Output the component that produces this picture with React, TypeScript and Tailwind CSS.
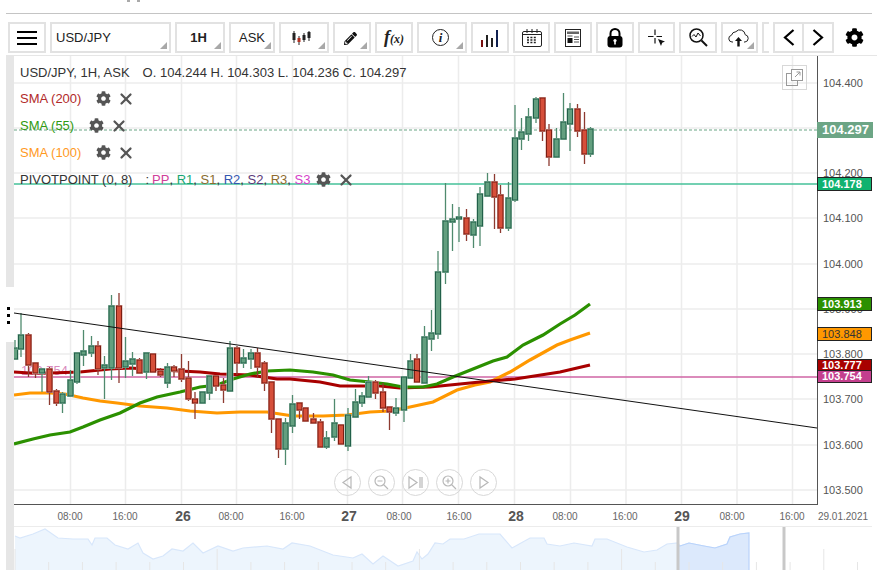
import type { ReactNode } from "react"
import { FaCog, FaPencilAlt } from "react-icons/fa"
import { X } from "lucide-react"

// [x, wickTop, wickBottom, bodyTop, bodyBottom, up]
const candles: [number, number, number, number, number, number][] = [
  [15, 340, 359, 348, 359, 1], [21, 313, 357, 335, 349, 1], [28.5, 333, 377, 335, 365, 0], [35.5, 363, 378, 363, 373, 0],
  [42, 368, 392, 369, 373, 1], [49.5, 367, 405, 369, 392, 0], [56.5, 389, 406, 391, 403, 0], [62.5, 392, 413, 394, 403, 1],
  [70.5, 370, 397, 380, 396, 1], [77, 353, 384, 353, 382, 1], [83.5, 330, 366, 351, 355, 1], [91.5, 336, 357, 346, 353, 1],
  [98, 341, 375, 346, 369, 0], [104.5, 356, 399, 365, 368, 1], [111.5, 295, 380, 306, 368, 1], [119, 293, 383, 306, 368, 0],
  [125.5, 337, 378, 361, 367, 1], [132.5, 352, 376, 359, 364, 1], [139.5, 358, 374, 360, 373, 0], [146.5, 353, 379, 353, 372, 1],
  [153, 353, 373, 354, 372, 0], [160.5, 368, 377, 371, 375, 0], [167.5, 363, 388, 367, 383, 1], [174, 365, 377, 367, 371, 0],
  [181.5, 354, 382, 369, 379, 0], [188.5, 361, 401, 378, 399, 0], [195, 392, 419, 399, 403, 0], [202.5, 392, 404, 392, 403, 1],
  [209.5, 375, 400, 376, 393, 1], [216, 375, 391, 376, 386, 0], [223.5, 378, 403, 385, 390, 0], [230, 341, 392, 348, 391, 1],
  [237, 346, 375, 348, 363, 0], [243.5, 349, 368, 358, 363, 1], [251, 349, 369, 353, 359, 1], [257.5, 348, 378, 353, 367, 0],
  [264.5, 361, 391, 363, 383, 0], [271.5, 382, 433, 382, 419, 0], [278.5, 419, 458, 419, 449, 0], [285.5, 418, 465, 423, 449, 1],
  [292.5, 395, 433, 404, 426, 1], [299.5, 403, 419, 403, 410, 0], [305.5, 408, 422, 408, 421, 0], [313.5, 413, 424, 419, 423, 0],
  [320.5, 419, 447, 422, 447, 0], [326.5, 431, 449, 438, 447, 1], [334.5, 399, 441, 423, 437, 1], [341, 424, 445, 425, 444, 0],
  [348, 408, 451, 415, 446, 1], [355.5, 389, 418, 402, 417, 1], [362, 392, 407, 396, 403, 1], [368.5, 376, 397, 382, 397, 1],
  [375.5, 380, 399, 382, 393, 0], [383, 383, 412, 392, 408, 0], [389.5, 407, 430, 407, 412, 0], [396, 398, 416, 408, 413, 1],
  [404, 376, 422, 377, 410, 1], [410.5, 354, 378, 361, 378, 1], [417, 354, 382, 359, 382, 0], [424.5, 326, 383, 337, 383, 1],
  [431.5, 310, 351, 333, 339, 1], [438, 251, 339, 272, 334, 1], [445.5, 183, 284, 221, 272, 1], [452.5, 204, 251, 219, 222, 1],
  [459, 207, 242, 217, 219, 1], [466.5, 209, 241, 218, 234, 0], [473.5, 219, 248, 222, 235, 1], [480, 187, 246, 194, 226, 1],
  [487.5, 173, 196, 182, 196, 1], [494.5, 174, 229, 182, 197, 0], [500.5, 185, 233, 195, 228, 0], [508.5, 182, 231, 198, 228, 1],
  [515, 105, 202, 138, 200, 1], [521.5, 118, 150, 132, 139, 1], [528.5, 108, 141, 117, 134, 1], [536, 97, 123, 99, 118, 1],
  [542.5, 98, 141, 98, 131, 0], [549, 124, 166, 130, 157, 0], [556.5, 128, 157, 139, 157, 1], [563.5, 93, 139, 122, 139, 1],
  [570, 103, 151, 109, 124, 1], [577.5, 104, 137, 109, 131, 0], [584.5, 112, 164, 130, 154, 0], [590.5, 127, 157, 129, 154, 1],
]

const sma55 = "14,444 33,439 50,435 70,432 83,427 100,420 120,413 140,403 157,397 180,392 200,387 217,385 233,379 250,374 267,371 290,370 313,372 333,375 350,380 370,382 387,384 403,387 423,387 437,384 453,377 473,369 493,361 507,357 523,345 543,335 560,324 575,315 590,304"
const sma200 = "14,372 30,373 50,373 80,372 110,369 130,368 160,370 200,372 220,374 250,375 277,379 290,379 320,382 340,386 380,386 400,388 430,387 460,384 490,381 515,379 560,372 590,365"
const sma100 = "14,395 30,393 50,393 65,394 83,398 100,401 117,403 140,406 167,408 190,411 217,413 240,412 267,412 280,414 293,416 323,416 347,415 370,412 390,411 410,407 433,402 457,390 475,385 490,382 510,372 530,360 557,345 570,340 590,333"

const navLine = "15,535 20,537 33,533 45,528 58,537 73,538 88,538 92,544 95,537 107,537 115,544 128,548 138,542 143,552 153,558 163,555 172,548 183,550 193,542 203,552 218,545 233,550 243,547 267,545 283,548 292,542 310,545 333,554 353,557 362,553 373,563 383,555 398,565 413,560 417,551 422,558 428,553 435,542 443,543 450,538 464,538 479,533 500,533 512,547 530,537 544,537 547,543 560,545 574,542 592,545 595,538 607,538 627,546 644,551 657,549 667,543 678,542 680,545 689,542 704,545 715,547 727,543 730,536 740,533 749,532"

const xTicks: { x: number; t: string; big?: boolean }[] = [
  { x: 70, t: "08:00" }, { x: 125, t: "16:00" }, { x: 183, t: "26", big: true }, { x: 231, t: "08:00" },
  { x: 292, t: "16:00" }, { x: 349, t: "27", big: true }, { x: 399, t: "08:00" }, { x: 459, t: "16:00" },
  { x: 516, t: "28", big: true }, { x: 565, t: "08:00" }, { x: 625, t: "16:00" }, { x: 682, t: "29", big: true },
  { x: 732, t: "08:00" }, { x: 792, t: "16:00" }, { x: 843, t: "29.01.2021" },
]

const gridY = [83, 128, 173, 218, 264, 309, 354, 399, 445, 490]

// 104.300 sits fully under the 104.297 marker, so it isn't listed
const priceTicks: [string, number][] = [
  ["104.400", 83], ["104.200", 173], ["104.100", 218], ["104.000", 264],
  ["103.900", 309], ["103.800", 354], ["103.700", 399], ["103.600", 445], ["103.500", 490],
]

const gridX = [70.5, 125.5, 181.5, 236.5, 292.5, 347.5, 402.5, 458.5, 514.5, 570.5, 626, 681.5, 737, 792.5]

function Btn({ w, arrow, children }: { w: string; arrow?: boolean; children?: ReactNode }) {
  return (
    <div className={`relative h-[31px] flex items-center justify-center border-2 border-[#e2e2e2] ${w}`}>
      {children}
      {arrow && <span className="absolute right-[2px] bottom-[2px] w-0 h-0 border-l-[7px] border-l-transparent border-b-[7px] border-b-[#a8a8a8]" />}
    </div>
  )
}

function LegendActions() {
  return (
    <span className="flex items-center gap-[6px] text-[#555]">
      <FaCog size={15} />
      <X size={18} strokeWidth={3} />
    </span>
  )
}

function Sma({ label, color }: { label: string; color: string }) {
  return (
    <div className="h-[27px] flex items-center gap-[15px]">
      <span className={color}>{label}</span>
      <LegendActions />
    </div>
  )
}

function ChartDrawing() {
  return (
    <svg className="absolute inset-0" width="803" height="448" viewBox="14 56 803 448">
      {gridX.map((x) => (
        <line key={x} x1={x} x2={x} y1="56" y2="504" stroke="#ececec" strokeWidth="1.5" />
      ))}
      {gridY.map((y) => (
        <line key={y} x1="14" x2="817" y1={y} y2={y} stroke="#ececec" strokeWidth="1.5" />
      ))}
      <line x1="14" x2="817" y1="130" y2="130" stroke="#6aa585" strokeDasharray="3 2" />
      <line x1="14" x2="817" y1="184" y2="184" stroke="#45c198" strokeWidth="1.6" />
      <line x1="14" x2="817" y1="377" y2="377" stroke="#cf64a4" strokeWidth="1.6" />
      <text x="21" y="375" fontSize="13" fill="#d98bbd">103.754</text>
      <polyline points={sma100} fill="none" stroke="#ff9800" strokeWidth="3.2" />
      <polyline points={sma200} fill="none" stroke="#a80000" strokeWidth="3.2" />
      <polyline points={sma55} fill="none" stroke="#2b9000" strokeWidth="3.2" />
      {candles.map(([x, wt, wb, bt, bb, up]) => (
        <g key={x}>
          <line x1={x} x2={x} y1={wt} y2={wb} stroke={up ? "#4f8a6e" : "#8d3a30"} strokeWidth="1.3" />
          <rect x={x - 3.5} y={bt - 1} width="7" height={bb - bt + 2} fill={up ? "#9fc4b0" : "#d8a49c"} />
          <rect
            x={x - 2.5}
            y={bt}
            width="5"
            height={bb - bt}
            fill={up ? "#639f7f" : "#d64f3a"}
            stroke={up ? "#22604a" : "#7c1d12"}
            strokeWidth="1"
          />
        </g>
      ))}
      <line x1="14" y1="313" x2="817" y2="428" stroke="#111" strokeWidth="1" />
    </svg>
  )
}

function NavButton({ d, children }: { d?: string; children?: ReactNode }) {
  return (
    <div className="w-[27px] h-[27px] rounded-full border border-[#d8d8d8] flex items-center justify-center">
      <svg width="17" height="17" viewBox="0 0 17 17" fill="none" stroke="#b8b8b8" strokeWidth="1.2">
        {d && <path d={d} />}
        {children}
      </svg>
    </div>
  )
}

function Navigator() {
  const ticks = Array.from({ length: 26 }, (_, i) => 15 + i * 33.7)
  return (
    <svg className="block" width="858" height="44" viewBox="14 526 858 44">
      <polygon points={`15,570 ${navLine} 749,570`} fill="#edf5fd" />
      <polyline points={navLine} fill="none" stroke="#d8e7fb" strokeWidth="1.2" />
      <polygon points="678,570 678,545 680,545 689,542 704,545 715,547 727,543 730,536 740,533 749,532 749,570" fill="#dce9fc" />
      <polyline points="678,545 680,545 689,542 704,545 715,547 727,543 730,536 740,533 749,532 749,570" fill="none" stroke="#b9d3fb" strokeWidth="1.2" />
      {ticks.map((x, i) => (
        <line key={x} x1={x} x2={x} y1={i % 6 === 0 ? 548 : 561} y2="570" stroke="#e6e6e6" strokeWidth="1" />
      ))}
      <line x1="678" x2="678" y1="526" y2="570" stroke="#c8c8c8" strokeWidth="3" />
      <line x1="784" x2="784" y1="526" y2="570" stroke="#c8c8c8" strokeWidth="3" />
    </svg>
  )
}

export default function App() {
  return (
    <div className="relative w-[877px] h-[579px] bg-white overflow-hidden text-[13px] text-[#333] font-['Liberation_Sans',Arial,sans-serif]">
      <div className="absolute left-[127px] top-0 flex gap-[7px]">
        <div className="w-[3px] h-[2px] bg-[#aaa]" />
        <div className="w-[3px] h-[2px] bg-[#aaa]" />
      </div>
      <div className="pt-[13px] pl-[6px] pr-[5px]">
        <div className="h-px bg-[#c4c4c4]" />
      </div>

      <div className="mt-[8px] pl-[8px] flex items-center gap-1 text-[#222]">
        <Btn w="w-[38px]">
          <div className="w-[20px] flex flex-col gap-[4px]">
            <div className="h-[2px] bg-black" />
            <div className="h-[2px] bg-black" />
            <div className="h-[2px] bg-black" />
          </div>
        </Btn>
        <Btn w="w-[121px] !justify-start pl-[4px]" arrow>USD/JPY</Btn>
        <Btn w="w-[50px] font-bold pr-[3px]" arrow>1H</Btn>
        <Btn w="w-[46px]" arrow>ASK</Btn>
        <Btn w="w-[50px]" arrow>
          <svg className="mr-[6px]" width="19" height="16" viewBox="0 0 19 16" fill="none">
            <path d="M2 1v12M7 6v9M12 3v9M17 1v10" stroke="#222" />
            <rect x="0.5" y="3" width="3" height="7" fill="#222" />
            <rect x="5.5" y="8" width="3" height="4" fill="#b03020" />
            <rect x="10.5" y="5" width="3" height="5" fill="#222" />
            <rect x="15.5" y="2" width="3" height="6" fill="#222" />
          </svg>
        </Btn>
        <Btn w="w-[38px]" arrow>
          <FaPencilAlt className="mr-[3px] mt-[2px]" size={13} color="#111" />
        </Btn>
        <Btn w="w-[38px]">
          <span className="italic font-['Liberation_Serif',serif] text-[12px] font-bold text-[#222]">
            <span className="text-[18px]">f</span>(x)
          </span>
        </Btn>
        <Btn w="w-[50px]" arrow>
          <span className="mr-[3px] w-[17px] h-[17px] rounded-full border-[1.5px] border-[#222] flex items-center justify-center italic font-bold font-['Liberation_Serif',serif] text-[13px]">i</span>
        </Btn>
        <Btn w="w-[38px]">
          <svg width="18" height="18" viewBox="0 0 18 18">
            <rect x="0" y="11" width="2" height="7" fill="#7a1010" />
            <rect x="5" y="6" width="2" height="12" fill="#222" />
            <rect x="10" y="9" width="2" height="9" fill="#222" />
            <rect x="15" y="1" width="2" height="17" fill="#102050" />
          </svg>
        </Btn>
        <Btn w="w-[37px]">
          <svg width="20" height="20" viewBox="0 0 20 20" fill="none" stroke="#222">
            <rect x="0.5" y="3.5" width="19" height="15" rx="1.5" />
            <path d="M0.5 6.5h19M5 1v4M10 1v4M15 1v4" />
            <path d="M5 9.5h10M5 12h10M5 14.5h10" stroke="#222" strokeWidth="1.5" strokeDasharray="2 1.4" />
          </svg>
        </Btn>
        <Btn w="w-[38px]">
          <svg width="16" height="18" viewBox="0 0 16 18" fill="none">
            <rect x="0.5" y="0.5" width="15" height="17" stroke="#222" />
            <rect x="2" y="2.5" width="12" height="2.5" fill="#666" />
            <rect x="2.5" y="9" width="5" height="5" fill="#111" />
            <path d="M9 8h5M9 10.5h5M9 13h5M2.5 7h5" stroke="#555" />
          </svg>
        </Btn>
        <Btn w="w-[38px]">
          <svg width="16" height="20" viewBox="0 0 16 20" fill="none">
            <path d="M3.500 9V5.500a4.500 4.500 0 0 1 9 0V9" stroke="#000" strokeWidth="2" />
            <rect x="0.500" y="8" width="15" height="11.500" rx="3" fill="#000" />
            <circle cx="8" cy="12.500" r="1.600" fill="#fff" />
            <rect x="7.200" y="13" width="1.600" height="3.500" fill="#fff" />
          </svg>
        </Btn>
        <Btn w="w-[37px]">
          <svg width="18" height="18" viewBox="0 0 18 18" fill="none">
            <path d="M7 0.500v5.500M7 9v5.500M0 7.500h5.500M8.500 7.500h5.500" stroke="#111" strokeWidth="1.2" />
            <path d="M10 10l7 2.500-2.800 1.300-1.200 3.200z" fill="#111" />
          </svg>
        </Btn>
        <Btn w="w-[38px]">
          <svg width="19" height="19" viewBox="0 0 19 19" fill="none" stroke="#111">
            <circle cx="7.500" cy="7.500" r="6.500" strokeWidth="1.500" />
            <path d="M12.500 12.500l5.500 5.500" strokeWidth="2" />
            <path d="M3 8.500l2-2 2 2.500 2-4 2.500 3" strokeWidth="1" />
          </svg>
        </Btn>
        <Btn w="w-[37px]" arrow>
          <svg className="mr-[3px]" width="21" height="18" viewBox="0 0 21 18" fill="none">
            <path d="M5 13H4a3.400 3.400 0 0 1-.6-6.700 5 5 0 0 1 4.500-3.600 5.300 5.300 0 0 1 9.300 3 3.700 3.700 0 0 1-.2 7.300h-1" stroke="#222" />
            <path d="M10.500 8l3.500 4h-2.300v5.500H9.300V12H7z" fill="#111" />
          </svg>
        </Btn>
        <div className="w-[7px] h-[31px] border-2 border-r-0 border-[#e2e2e2]" />
        <div className="flex border-2 border-[#e2e2e2] h-[31px]">
          <div className="w-[29px] flex items-center justify-center border-r-2 border-[#e2e2e2]">
            <svg width="12" height="17" viewBox="0 0 12 17" fill="none" stroke="#000" strokeWidth="2.200">
              <path d="M10.500 1L2 8.500l8.500 7.500" />
            </svg>
          </div>
          <div className="w-[28px] flex items-center justify-center">
            <svg width="12" height="17" viewBox="0 0 12 17" fill="none" stroke="#000" strokeWidth="2.200">
              <path d="M1.500 1L10 8.500l-8.500 7.500" />
            </svg>
          </div>
        </div>
        <div className="ml-[7px]"><FaCog size={19} color="#000" /></div>
      </div>

      <div className="mt-[2px] pl-[6px] flex h-[515px]">
        <div className="w-[8px] h-full flex flex-col border-t border-[#e6e6e6] bg-[#e6e6e6]">
          <div className="h-[231px]" />
          <div className="h-[55px] bg-white flex flex-col items-start pl-[1px] pt-[20px] gap-[4px]">
            <div className="w-[3px] h-[3px] bg-black" />
            <div className="w-[3px] h-[3px] bg-black" />
            <div className="w-[3px] h-[3px] bg-black" />
          </div>
        </div>

        <div className="flex-1 border-t border-[#e6e6e6]">
          <div className="flex">
            <div className="relative w-[804px] h-[449px] border-r border-b border-[#555]">
              <ChartDrawing />

              <div className="absolute left-[6px] top-0 flex flex-col">
                <div className="h-[29px] pt-[4px] flex items-center gap-[13px]">
                  <span>USD/JPY, 1H, ASK</span>
                  <span>O. 104.244 H. 104.303 L. 104.236 C. 104.297</span>
                </div>
                <Sma label="SMA (200)" color="text-[#b22a2a]" />
                <Sma label="SMA (55)" color="text-[#2f9a10]" />
                <Sma label="SMA (100)" color="text-[#ff9a1f]" />
                <div className="h-[27px] flex items-center">
                  <span>PIVOTPOINT (0, 8)</span>
                  <span className="ml-[13px] mr-[3px]">:</span>
                  <span className="text-[#d0409a]">PP</span>,&nbsp;
                  <span className="text-[#17a673]">R1</span>,&nbsp;
                  <span className="text-[#8a6d2f]">S1</span>,&nbsp;
                  <span className="text-[#3456b0]">R2</span>,&nbsp;
                  <span className="text-[#5b3a7a]">S2</span>,&nbsp;
                  <span className="text-[#8f6b2f]">R3</span>,&nbsp;
                  <span className="text-[#d63fc9] mr-[6px]">S3</span>
                  <LegendActions />
                </div>
              </div>

              <div className="absolute left-[768px] top-[9px] w-[25px] h-[25px] border border-[#d8d8d8] flex items-center justify-center">
                <svg width="17" height="17" viewBox="0 0 17 17" fill="none" stroke="#999">
                  <rect x="0.500" y="4.500" width="11" height="12" />
                  <rect x="5.500" y="0.500" width="11" height="11" fill="#fff" />
                  <path d="M9 8l5-5M10.500 3H14v3.500" />
                </svg>
              </div>

              <div className="absolute left-[320px] top-[413px] flex gap-[7px]">
                <NavButton d="M12 3v11L4 8.500z" />
                <NavButton>
                  <circle cx="7" cy="7" r="5" />
                  <path d="M4.500 7h5M10.500 10.500L15 15" />
                </NavButton>
                <NavButton d="M2 3v11l8-5.500zM13 3v11M15 3v11" />
                <NavButton>
                  <circle cx="7" cy="7" r="5" />
                  <path d="M4.500 7h5M7 4.500v5M10.500 10.500L15 15" />
                </NavButton>
                <NavButton d="M5 3v11l8-5.500z" />
              </div>
            </div>

            <div className="relative flex-1 h-[449px]">
              {priceTicks.map(([p, y]) => (
                <span key={p} className="absolute left-[5px] text-[11px] leading-[14px] text-[#555]" style={{ top: y - 63 }}>
                  {p}
                </span>
              ))}
              <div className="absolute left-[-1px] top-[66px] w-[56px] h-[16px] bg-[#6ca585] text-white font-bold text-[13px] leading-[16px] pl-[5px]">104.297</div>
              <div className="absolute left-[-1px] top-[121px] w-[55px] h-[14px] bg-[#10b26f] border border-[#222] text-white font-bold text-[11px] leading-[12px] pl-[4px]">104.178</div>
              <div className="absolute left-[-1px] top-[241px] w-[55px] h-[14px] bg-[#2b9000] border border-[#222] text-white font-bold text-[11px] leading-[12px] pl-[4px]">103.913</div>
              <div className="absolute left-[-1px] top-[271px] w-[55px] h-[14px] bg-[#ff9800] border border-[#222] text-[#333] text-[11px] leading-[12px] pl-[4px]">103.848</div>
              <div className="absolute left-[-1px] top-[303px] w-[55px] h-[12px] bg-[#a80000] border border-[#222] text-white font-bold text-[11px] leading-[10px] pl-[4px]">103.777</div>
              <div className="absolute left-[-1px] top-[314px] w-[55px] h-[13px] bg-[#c43f8e] border border-[#222] text-white font-bold text-[11px] leading-[11px] pl-[4px]">103.754</div>
            </div>
          </div>

          <div className="relative h-[21px] w-[858px]">
            {xTicks.map((t) => (
              <span
                key={t.x}
                className={
                  t.big
                    ? "absolute top-[2px] -translate-x-1/2 text-[14px] leading-[18px] font-bold text-[#555]"
                    : "absolute top-[5px] -translate-x-1/2 text-[10px] leading-[13px] text-[#666]"
                }
                style={{ left: t.x - 14 }}
              >
                {t.t}
              </span>
            ))}
          </div>
          <div className="border-t border-[#ececec] w-[858px] h-[44px] overflow-hidden">
            <Navigator />
          </div>
        </div>
      </div>
    </div>
  )
}
